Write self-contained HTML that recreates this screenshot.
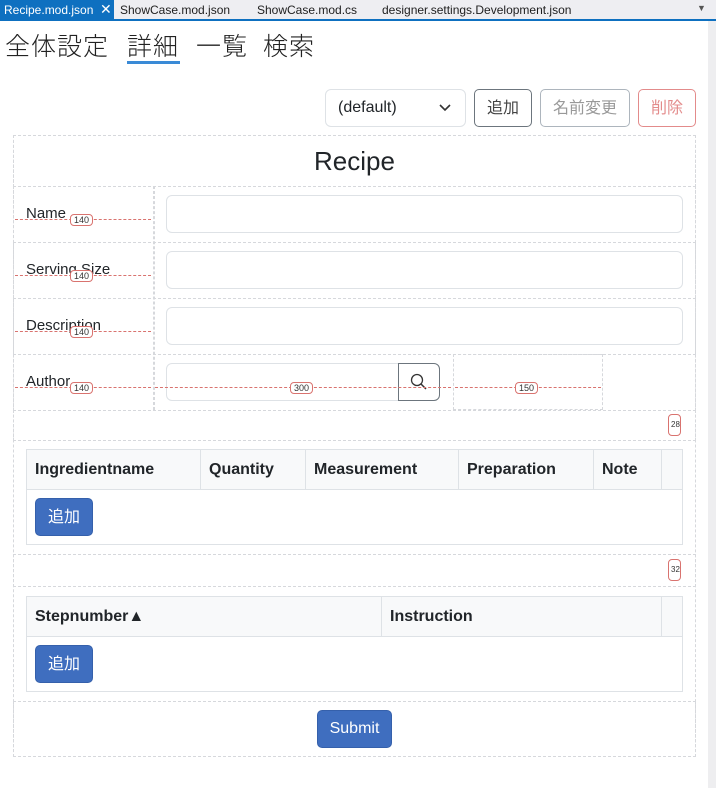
<!DOCTYPE html><html><head><meta charset="utf-8"><style>
*{box-sizing:border-box}body{margin:0;width:716px;height:788px;overflow:hidden;background:#fff;font-family:"Liberation Sans","Noto Sans CJK JP",sans-serif;color:#212529;position:relative}
.a{position:absolute}
.tabs{left:0;top:0;width:716px;height:19px;background:#eeeef2;font-size:12px}
.tab{position:absolute;top:3px;color:#1e1e1e}
.d{border:1px dashed #d6d8dc}
.inp{border:1px solid #dee2e6;border-radius:6px;background:#fff}
.btn{border:1px solid;border-radius:5px;font-size:16px;display:flex;align-items:center;justify-content:center;line-height:1;padding-top:2px}
.pb{background:#3f6ebf;color:#fff;border-color:#3560ab;border-radius:5px}
.lbl{font-size:15px;color:#212529}
.m{position:absolute;height:0;border-top:1px dashed #d9736f}
.tag{position:absolute;font-size:9px;border:1px solid #d9736f;border-radius:4px;background:#fff;padding:0 3px;line-height:10px;color:#333}
.nav{position:absolute;top:28px;font-size:25px;color:#222;font-family:'Noto Sans CJK JP',sans-serif;font-weight:300;line-height:34px;white-space:nowrap;letter-spacing:1px}
th{font-weight:bold;text-align:left;font-size:16px;background:#f8f9fa;border-right:1px solid #dee2e6;border-bottom:1px solid #dee2e6;padding:0 8px;height:40px}
table{border-collapse:collapse;position:absolute;border:1px solid #dee2e6}
</style></head><body>
<div class="a tabs">
<div class="a" style="left:0;top:0;width:114px;height:19px;background:#0e70c0"></div>
<div class="tab" style="left:4px;color:#fff">Recipe.mod.json</div>
<div class="tab" style="left:100px;color:#fff;top:1px;font-size:14px">✕</div>
<div class="tab" style="left:120px">ShowCase.mod.json</div>
<div class="tab" style="left:257px">ShowCase.mod.cs</div>
<div class="tab" style="left:382px">designer.settings.Development.json</div>
<div class="tab" style="left:697px;font-size:9px;color:#555">▼</div>
</div>
<div class="a" style="left:0;top:19px;width:716px;height:2px;background:#0e70c0"></div>
<div class="a" style="left:708px;top:21px;width:8px;height:767px;background:#eeeef0"></div>
<div class="nav" style="left:5px">全体設定</div>
<div class="nav" style="left:127px">詳細</div>
<div class="nav" style="left:196px">一覧</div>
<div class="nav" style="left:263px">検索</div>
<div class="a" style="left:127px;top:61px;width:53px;height:3px;background:#3a8ad6"></div>
<div class="a inp" style="left:325px;top:89px;width:141px;height:38px;font-size:16px;padding:9px 12px">(default)<svg style="position:absolute;right:14px;top:14px" width="12" height="8"><path d="M1 1l5 5 5-5" fill="none" stroke="#333" stroke-width="1.6"/></svg></div>
<div class="a btn" style="left:474px;top:89px;width:58px;height:38px;border-color:#6c757d;color:#444">追加</div>
<div class="a btn" style="left:540px;top:89px;width:90px;height:38px;border-color:#adb5bd;color:#999">名前変更</div>
<div class="a btn" style="left:638px;top:89px;width:58px;height:38px;border-color:#e38b8b;color:#e38b8b">削除</div>
<div class="a d" style="left:13px;top:135px;width:683px;height:622px"></div>
<div class="a d" style="left:13px;top:135px;width:683px;height:52px;font-size:26px;text-align:center;line-height:50px">Recipe</div>
<div class="a d" style="left:13px;top:186px;width:683px;height:57px"></div>
<div class="a d" style="left:13px;top:242px;width:683px;height:57px"></div>
<div class="a d" style="left:13px;top:298px;width:683px;height:57px"></div>
<div class="a d" style="left:13px;top:354px;width:683px;height:57px"></div>
<div class="a d" style="left:13px;top:410px;width:683px;height:31px"></div>
<div class="a d" style="left:13px;top:554px;width:683px;height:33px"></div>
<div class="a d" style="left:13px;top:701px;width:683px;height:56px"></div>
<div class="a d" style="left:153px;top:186px;width:1px;height:224px"></div>
<div class="a d" style="left:453px;top:354px;width:150px;height:56px"></div>
<div class="a inp" style="left:166px;top:195px;width:517px;height:38px"></div>
<div class="a inp" style="left:166px;top:251px;width:517px;height:38px"></div>
<div class="a inp" style="left:166px;top:307px;width:517px;height:38px"></div>
<div class="a inp" style="left:166px;top:363px;width:240px;height:38px"></div>
<div class="a" style="left:398px;top:363px;width:42px;height:38px;border:1px solid #6c757d;border-radius:0 6px 6px 0;background:#fff"><svg width="40" height="36"><circle cx="18" cy="16" r="5.5" fill="none" stroke="#333" stroke-width="1.3"/><path d="M22 20l5 5" stroke="#333" stroke-width="1.5"/></svg></div>
<div class="a lbl" style="left:26px;top:205px">Name</div>
<div class="a lbl" style="left:26px;top:261px">Serving Size</div>
<div class="a lbl" style="left:26px;top:317px">Description</div>
<div class="a lbl" style="left:26px;top:373px">Author</div>
<div class="m" style="left:15px;top:219px;width:136px"></div><div class="tag" style="left:70px;top:214px">140</div>
<div class="m" style="left:15px;top:275px;width:136px"></div><div class="tag" style="left:70px;top:270px">140</div>
<div class="m" style="left:15px;top:331px;width:136px"></div><div class="tag" style="left:70px;top:326px">140</div>
<div class="m" style="left:15px;top:387px;width:136px"></div><div class="tag" style="left:70px;top:382px">140</div>
<div class="m" style="left:155px;top:387px;width:296px"></div><div class="tag" style="left:290px;top:382px">300</div>
<div class="m" style="left:455px;top:387px;width:146px"></div><div class="tag" style="left:515px;top:382px">150</div>
<div class="tag" style="left:668px;top:414px;padding:5px 2px;height:22px;width:13px;font-size:8px">28</div>
<div class="tag" style="left:668px;top:559px;padding:5px 2px;height:22px;width:13px;font-size:8px">32</div>
<table style="left:26px;top:449px;width:657px;height:96px"><tr><th style="width:174px">Ingredientname</th><th style="width:105px">Quantity</th><th style="width:153px">Measurement</th><th style="width:135px">Preparation</th><th style="width:68px">Note</th><th></th></tr><tr><td colspan="6" style="padding:0"></td></tr></table>
<div class="a btn pb" style="left:35px;top:498px;width:58px;height:38px">追加</div>
<table style="left:26px;top:596px;width:657px;height:96px"><tr><th style="width:355px">Stepnumber▲</th><th style="width:280px">Instruction</th><th></th></tr><tr><td colspan="3"></td></tr></table>
<div class="a btn pb" style="left:35px;top:645px;width:58px;height:38px">追加</div>
<div class="a btn pb" style="left:317px;top:710px;width:75px;height:38px;padding-top:0">Submit</div>
</body></html>
